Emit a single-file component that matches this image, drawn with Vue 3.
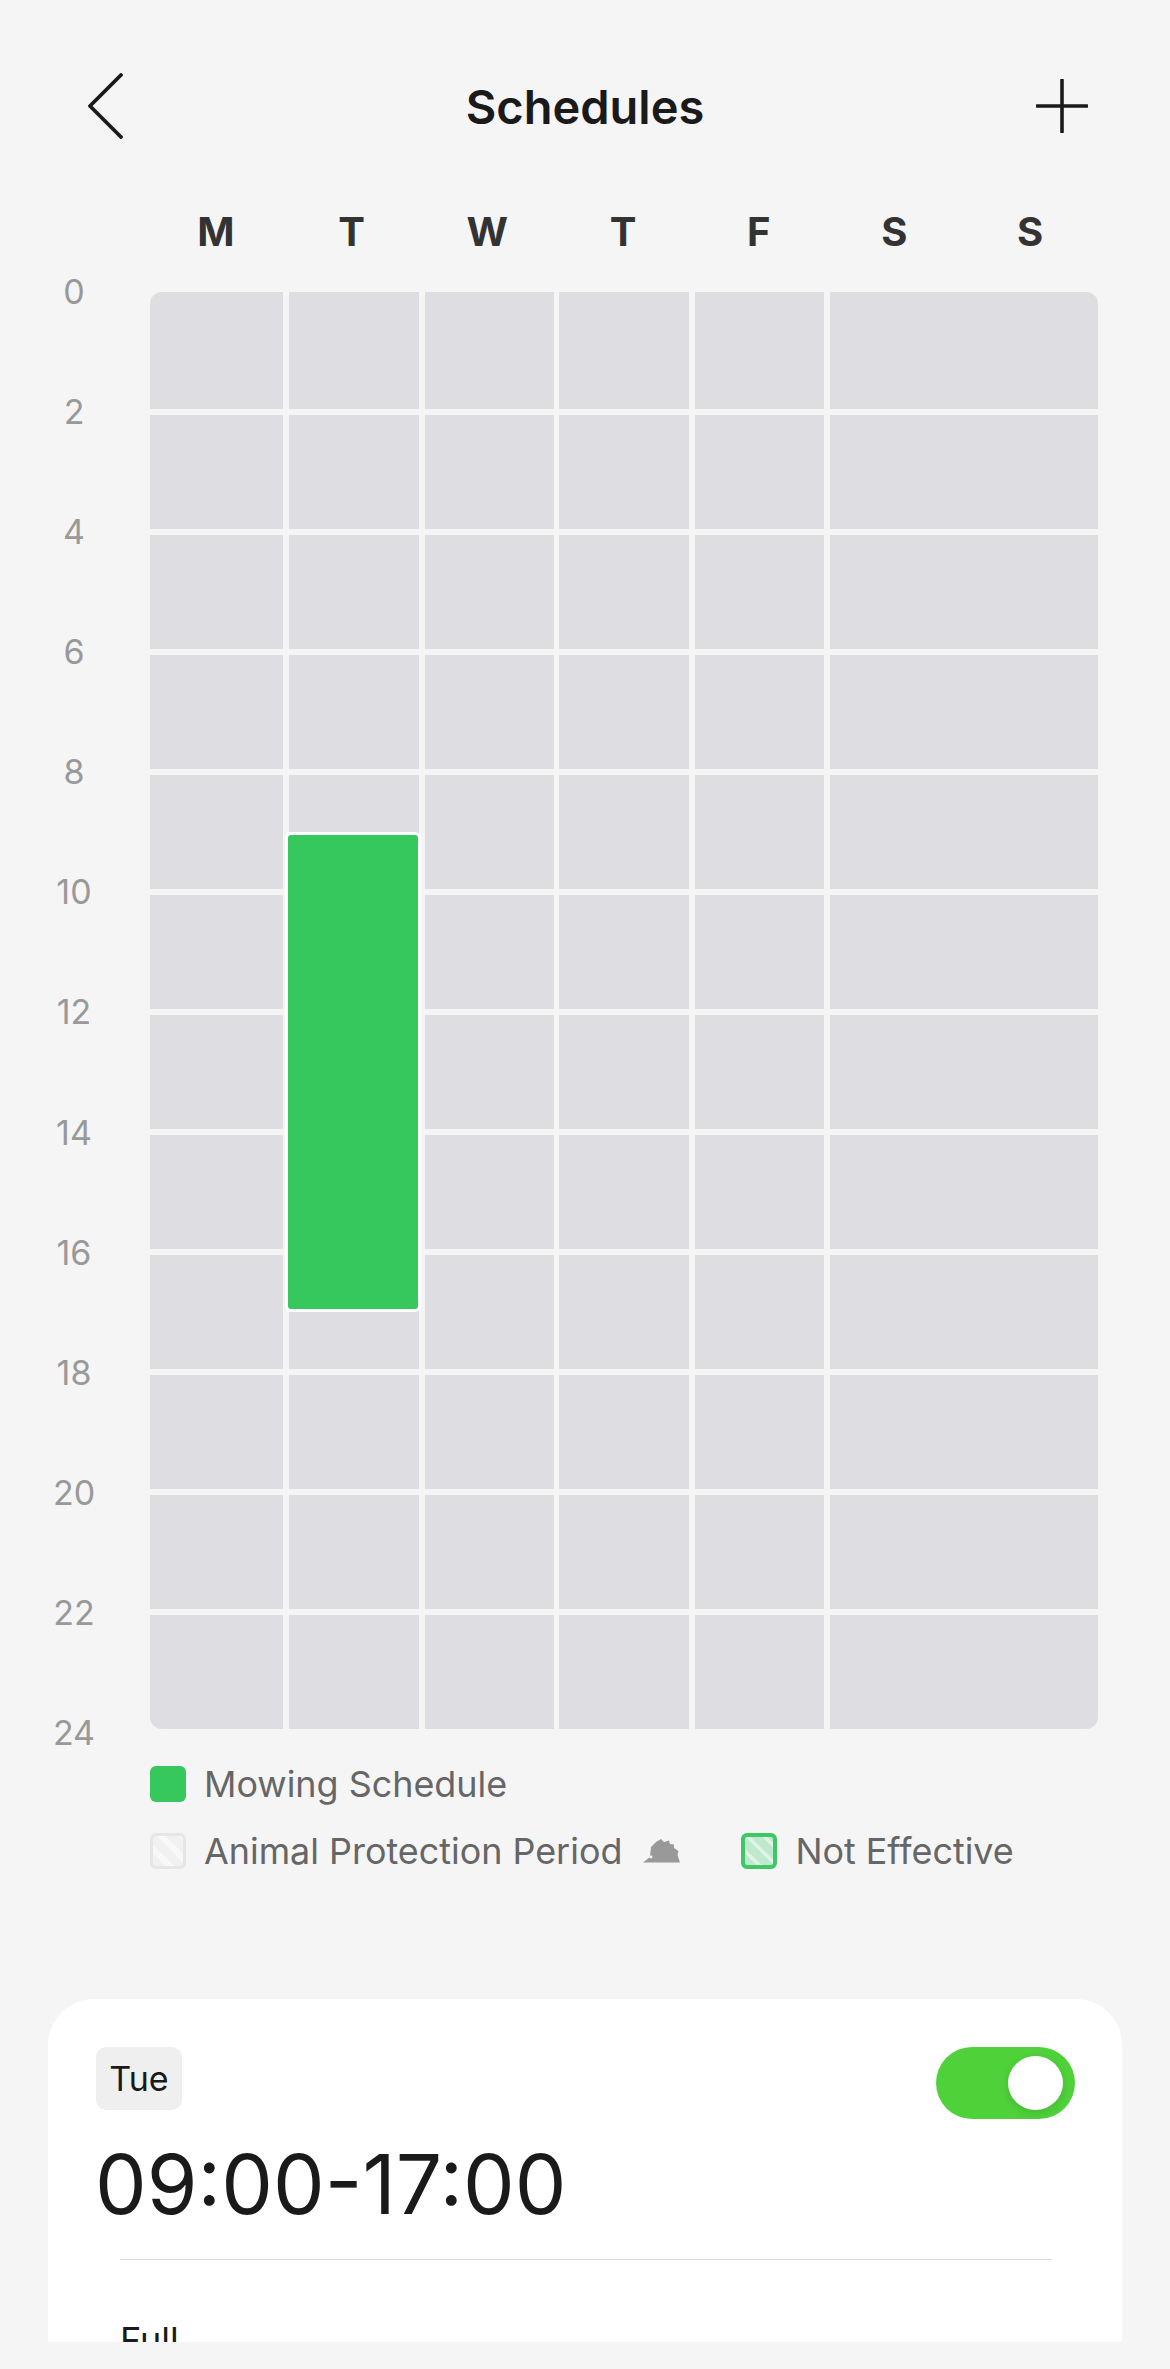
<script setup>
const days = ['M', 'T', 'W', 'T', 'F', 'S', 'S']
const hours = [0, 2, 4, 6, 8, 10, 12, 14, 16, 18, 20, 22, 24]
const cellCount = 72
</script>

<template>
  <div class="page">
    <div class="navBar">
      <svg class="backIcon" width="36" height="66" viewBox="0 0 36 66">
        <path d="M33 2 L2 33 L33 64" fill="none" stroke="#1a1a1a" stroke-width="3.8" stroke-linecap="round" stroke-linejoin="round" />
      </svg>
      <h1 class="pageTitle">Schedules</h1>
      <svg class="addIcon" width="52" height="54" viewBox="0 0 52 54">
        <path d="M26 1 V53 M1 27 H51" fill="none" stroke="#1a1a1a" stroke-width="3.6" stroke-linecap="round" />
      </svg>
    </div>

    <div class="dayRow">
      <span v-for="(day, i) in days" :key="i" class="dayName">{{ day }}</span>
    </div>

    <div class="chart">
      <div class="hourColumn">
        <span v-for="hour in hours" :key="hour" class="hourLabel">{{ hour }}</span>
      </div>
      <div class="grid">
        <div v-for="i in cellCount" :key="i" class="cell"></div>
        <div class="scheduleBlock"></div>
      </div>
    </div>

    <div class="legend">
      <div class="legendRow">
        <div class="legendItem">
          <span class="swatch swatchGreen"></span>
          <span class="legendText">Mowing Schedule</span>
        </div>
      </div>
      <div class="legendRow">
        <div class="legendItem">
          <span class="swatch swatchAnimal"></span>
          <span class="legendText">Animal Protection Period</span>
          <svg class="hedgehog" width="37" height="24" viewBox="0 0 37 24">
            <path d="M0 23.5 L7 18 L8 8 L13 3 L18 0 L21 3 L26 1.500 L27 5 L31 5.500 L31 9 L35.500 12 L34.500 16 L37 23.500 Z" fill="#999999" />
            <circle cx="8" cy="18" r="1.4" fill="#f5f5f5" />
          </svg>
        </div>
        <div class="legendItem">
          <span class="swatch swatchIdle"></span>
          <span class="legendText">Not Effective</span>
        </div>
      </div>
    </div>

    <div class="cardClip">
      <div class="card">
        <div class="cardTop">
          <span class="dayTag">Tue</span>
          <div class="toggle"><span class="knob"></span></div>
        </div>
        <p class="timeRange">09:00-17:00</p>
        <div class="divider"></div>
        <p class="modeLabel">Full</p>
      </div>
    </div>
  </div>
</template>

<style>
html, body {
  margin: 0;
  background: #f5f5f6;
}
</style>

<style scoped>
.page {
  width: 1170px;
  height: 2369px;
  background: #f5f5f6;
  overflow: hidden;
  font-family: Inter, "Liberation Sans", sans-serif;
}
.navBar {
  height: 72px;
  padding: 70px 82px 0 88px;
  display: flex;
  align-items: center;
  justify-content: space-between;
  position: relative;
}
.backIcon, .addIcon {
  display: block;
}
.pageTitle {
  position: absolute;
  left: 0;
  right: 0;
  margin: 0;
  text-align: center;
  font-size: 47px;
  font-weight: 600;
  color: #1a1a1a;
}
.dayRow {
  margin: 66px 0 0 148px;
  width: 950px;
  display: flex;
}
.dayName {
  flex: 1;
  text-align: center;
  font-size: 40px;
  line-height: 48px;
  font-weight: 700;
  color: #333;
}
.chart {
  margin-top: 36px;
  display: flex;
  align-items: flex-start;
}
.hourColumn {
  width: 150px;
  height: 1441px;
  display: flex;
  flex-direction: column;
  justify-content: space-between;
  flex-shrink: 0;
}
.hourLabel {
  width: 148px;
  height: 0;
  line-height: 0;
  text-align: center;
  font-size: 34px;
  color: #999;
}
.grid {
  position: relative;
  width: 948px;
  height: 1437px;
  display: grid;
  grid-template-columns: 133px 130px 129px 130px 129px 268px;
  grid-template-rows: 117px repeat(11, 114px);
  column-gap: 5.8px;
  row-gap: 6px;
  border-radius: 12px;
  overflow: hidden;
}
.cell {
  background: #dedde2;
}
.scheduleBlock {
  position: absolute;
  left: 135px;
  top: 540px;
  width: 136px;
  height: 480px;
  box-sizing: border-box;
  background: #36c85c;
  border: 3px solid #fff;
  border-radius: 6px;
}
.legend {
  margin: 33px 0 0 150px;
  display: flex;
  flex-direction: column;
  gap: 31px;
}
.legendRow {
  display: flex;
  align-items: center;
  gap: 61px;
}
.legendItem {
  display: flex;
  align-items: center;
  height: 36px;
}
.swatch {
  width: 36px;
  height: 36px;
  box-sizing: border-box;
  border-radius: 6px;
  margin-right: 18px;
}
.swatchGreen {
  background: #36c85c;
}
.swatchAnimal {
  border: 3px solid #e6e6e8;
  background: repeating-linear-gradient(45deg, #f1f1f2 0 9px, #f8f8f8 9px 15px);
}
.swatchIdle {
  border: 4px solid #3fc766;
  background: repeating-linear-gradient(45deg, #bfe9cd 0 8px, #dff4e6 8px 12px);
}
.legendText {
  font-size: 35.9px;
  color: #666;
  white-space: nowrap;
}
.hedgehog {
  margin-left: 21px;
}
.cardClip {
  margin: 130px 48px 0;
  height: 343px;
  overflow: hidden;
}
.card {
  height: 500px;
  background: #fff;
  border-radius: 46px 46px 0 0;
  padding: 48px 47px 0 48px;
  box-sizing: border-box;
}
.cardTop {
  display: flex;
  justify-content: space-between;
  align-items: flex-start;
}
.dayTag {
  width: 86px;
  height: 63px;
  line-height: 63px;
  text-align: center;
  border-radius: 10px;
  background: #efefef;
  font-size: 34px;
  color: #1a1a1a;
}
.toggle {
  width: 139px;
  height: 72px;
  border-radius: 36px;
  background: #4fd13a;
  position: relative;
}
.knob {
  position: absolute;
  right: 12px;
  top: 9px;
  width: 55px;
  height: 54px;
  border-radius: 50%;
  background: #fff;
  box-shadow: 0 3px 8px rgba(0, 0, 0, 0.12);
}
.timeRange {
  margin: 16px 0 0 -1px;
  font-size: 82px;
  line-height: 100px;
  color: #1a1a1a;
}
.divider {
  margin: 24px 23px 0 24px;
  height: 1px;
  background: #ddd;
}
.modeLabel {
  margin: 60px 0 0 24px;
  font-size: 36px;
  line-height: 40px;
  color: #1a1a1a;
}
</style>
